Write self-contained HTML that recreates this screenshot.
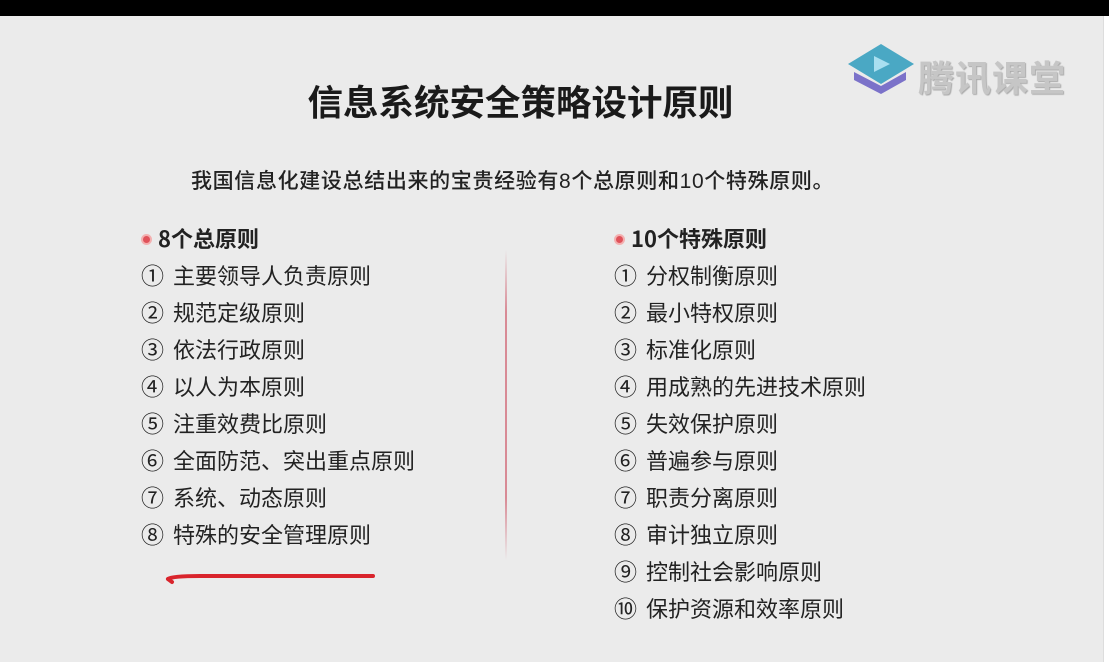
<!DOCTYPE html>
<html><head><meta charset="utf-8"><style>
body{margin:0;width:1109px;height:662px;background:#ebebeb;position:relative;overflow:hidden;font-family:"Liberation Sans","Noto Sans CJK SC",sans-serif;color:#222}
.top{position:absolute;left:0;top:0;width:1109px;height:16px;background:#000}
.edge{position:absolute;left:1103px;top:16px;width:6px;height:646px;background:#fff;border-left:1px solid #ddd}
.t{position:absolute;left:0;width:1041px;text-align:center;top:75px;font-size:35.5px;font-weight:bold;color:#1a1a1a}
.s{position:absolute;left:191px;top:165px;font-size:21px;color:#222;letter-spacing:0.65px;font-weight:500}
.col{position:absolute;top:220px;font-size:22px;line-height:37px;font-family:"Noto Sans CJK SC",sans-serif}
.col div{white-space:nowrap;height:37px;overflow:visible}
.n{display:inline-block;width:32px;font-size:23px;line-height:20px;vertical-align:baseline}
.h{font-weight:bold;font-size:22px}
.dot{display:inline-block;border-radius:50%;background:#e0525a;border:2px solid #f3b0b0;margin-right:6px;vertical-align:2px;width:7px;height:7px}
.div{position:absolute;left:505px;top:250px;width:2px;height:310px;background:linear-gradient(#ebebeb,#d88a95 20%,#d88a95 80%,#ebebeb)}
.logo{position:absolute;left:918px;top:50px;font-size:36px;font-weight:bold;color:#c6c6c6;letter-spacing:1px;text-shadow:1px 1px 1px #aaa}
</style></head><body>
<div class="top"></div><div class="edge"></div>
<svg style="position:absolute;left:848px;top:42px" width="66" height="54" viewBox="0 0 66 54">
<path d="M6 30 L33 44 L58 30 L58 38 L33 52 L6 38Z" fill="#7b72c9"/>
<path d="M0 22 L33 2 L66 22 L33 42Z" fill="#4aa8c4"/>
<path d="M26 14 L42 22 L26 30Z" fill="#a9dff0"/>
</svg>
<div class="logo">腾讯课堂</div>
<div class="t">信息系统安全策略设计原则</div>
<div class="s">我国信息化建设总结出来的宝贵经验有8个总原则和10个特殊原则。</div>
<div class="col" style="left:141px">
<div class="h"><span class="dot"></span>8个总原则</div>
<div><span class="n">①</span>主要领导人负责原则</div><div><span class="n">②</span>规范定级原则</div><div><span class="n">③</span>依法行政原则</div><div><span class="n">④</span>以人为本原则</div><div><span class="n">⑤</span>注重效费比原则</div><div><span class="n">⑥</span>全面防范、突出重点原则</div><div><span class="n">⑦</span>系统、动态原则</div><div><span class="n">⑧</span>特殊的安全管理原则</div>
</div>
<div class="div"></div>
<div class="col" style="left:614px">
<div class="h"><span class="dot"></span>10个特殊原则</div>
<div><span class="n">①</span>分权制衡原则</div><div><span class="n">②</span>最小特权原则</div><div><span class="n">③</span>标准化原则</div><div><span class="n">④</span>用成熟的先进技术原则</div><div><span class="n">⑤</span>失效保护原则</div><div><span class="n">⑥</span>普遍参与原则</div><div><span class="n">⑦</span>职责分离原则</div><div><span class="n">⑧</span>审计独立原则</div><div><span class="n">⑨</span>控制社会影响原则</div><div><span class="n">⑩</span>保护资源和效率原则</div>
</div>
<svg style="position:absolute;left:160px;top:568px" width="220" height="20"><path d="M8 11 Q12 8 40 8 L213 8" stroke="#d9242c" stroke-width="4" fill="none" stroke-linecap="round"/><path d="M8 11 L12 14" stroke="#d9242c" stroke-width="4" stroke-linecap="round"/></svg>
</body></html>
